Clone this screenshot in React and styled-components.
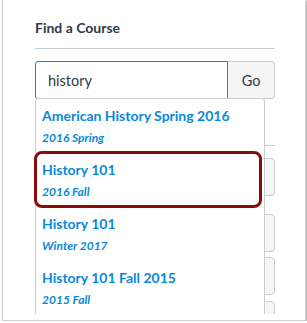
import React from 'react';
import styled, { createGlobalStyle } from 'styled-components';

const GlobalStyle = createGlobalStyle`
  html, body {
    margin: 0;
    padding: 0;
    background: #ffffff;
  }
  body {
    font-family: Lato, "Noto Sans", sans-serif;
  }
`;

const Frame = styled.div`
  box-sizing: border-box;
  margin-left: 2px;
  width: 304px;
  height: 321px;
  background: #ffffff;
  border: 1px solid #cfcfcf;
  border-top: none;
  box-shadow: 1px 1px 2px rgba(0, 0, 0, 0.35);
`;

const Clip = styled.div`
  height: 314px;
  overflow: hidden;
  padding: 18px 0 0 32px;
  box-sizing: border-box;
`;

const Sidebar = styled.div`
  width: 240px;
`;

const Heading = styled.h2`
  margin: 0;
  padding-bottom: 10px;
  border-bottom: 1px solid #c7cdd1;
  font-size: 14px;
  line-height: 20px;
  font-weight: 700;
  color: #2d3b45;
`;

const SearchRow = styled.div`
  position: relative;
  display: flex;
  margin-top: 12px;
  height: 38px;
`;

const SearchInput = styled.div`
  box-sizing: border-box;
  flex: 1;
  border: 1px solid #0c89d6;
  border-radius: 3px 0 0 3px;
  padding-left: 12px;
  display: flex;
  align-items: center;
  font-size: 14.5px;
  color: #2d3b45;
`;

const GoButton = styled.div`
  box-sizing: border-box;
  width: 47px;
  display: flex;
  align-items: center;
  justify-content: center;
  background: #f5f5f5;
  border: 1px solid #c7cdd1;
  border-left: none;
  border-radius: 0 4px 4px 0;
  font-size: 14.5px;
  color: #2d3b45;
`;

const Divider = styled.div`
  margin-top: 46px;
  border-top: 1px solid #c7cdd1;
`;

const BlockButton = styled.div`
  box-sizing: border-box;
  height: 38px;
  margin-top: ${({ gap }) => gap}px;
  background: #f5f5f5;
  border: 1px solid #c7cdd1;
  border-radius: 4px;
`;

const Dropdown = styled.ul`
  position: absolute;
  top: 37px;
  left: 0;
  z-index: 2;
  box-sizing: border-box;
  width: 230px;
  margin: 0;
  padding: 0;
  list-style: none;
  background: #ffffff;
  border: 1px solid #c7cdd1;
  border-radius: 3px 3px 0 0;
`;

const Option = styled.li`
  position: relative;
  padding: 7px 6px 6px;

  &::after {
    content: '';
    display: ${({ highlighted }) => (highlighted ? 'block' : 'none')};
    position: absolute;
    left: -2px;
    right: 2px;
    top: -2px;
    bottom: -1px;
    border: 3px solid #8b0a0a;
    border-radius: 8px;
  }
`;

const OptionTitle = styled.div`
  font-size: 14px;
  line-height: 20px;
  font-weight: 700;
  color: #0a88d8;
  white-space: nowrap;
`;

const OptionTerm = styled.div`
  margin-top: 3px;
  font-size: 12px;
  line-height: 18px;
  font-weight: 700;
  font-style: italic;
  color: #0a88d8;
`;

const courses = [
  { title: 'American History Spring 2016', term: '2016 Spring' },
  { title: 'History 101', term: '2016 Fall', highlighted: true },
  { title: 'History 101', term: 'Winter 2017' },
  { title: 'History 101 Fall 2015', term: '2015 Fall' },
];

const App = () => (
  <>
    <GlobalStyle />
    <Frame>
      <Clip>
        <Sidebar>
          <Heading>Find a Course</Heading>
          <SearchRow>
            <SearchInput>history</SearchInput>
            <GoButton>Go</GoButton>
            <Dropdown>
              {courses.map((c) => (
                <Option key={c.title + c.term} highlighted={c.highlighted}>
                  <OptionTitle>{c.title}</OptionTitle>
                  <OptionTerm>{c.term}</OptionTerm>
                </Option>
              ))}
            </Dropdown>
          </SearchRow>
          <Divider />
          <BlockButton gap={12} />
          <BlockButton gap={18} />
          <BlockButton gap={5} />
          <BlockButton gap={6} />
        </Sidebar>
      </Clip>
    </Frame>
  </>
);

export default App;
